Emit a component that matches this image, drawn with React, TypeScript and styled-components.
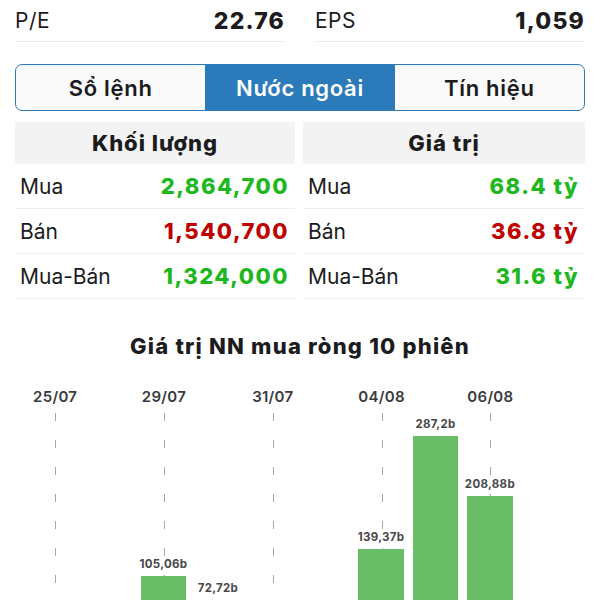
import React from 'react';
import styled, { createGlobalStyle } from 'styled-components';

const GlobalStyle = createGlobalStyle`
	html, body {
		margin: 0;
		padding: 0;
		overflow: hidden;
		background: #ffffff;
		font-family: Inter, 'Noto Sans', sans-serif;
		color: #1c1c1e;
	}
`;

type Row = { label: string; value: string; tone: 'up' | 'down' };

const volumeRows: Row[] = [
	{ label: 'Mua', value: '2,864,700', tone: 'up' },
	{ label: 'Bán', value: '1,540,700', tone: 'down' },
	{ label: 'Mua-Bán', value: '1,324,000', tone: 'up' },
];

const valueRows: Row[] = [
	{ label: 'Mua', value: '68.4 tỷ', tone: 'up' },
	{ label: 'Bán', value: '36.8 tỷ', tone: 'down' },
	{ label: 'Mua-Bán', value: '31.6 tỷ', tone: 'up' },
];

type Session = { date: string; value: number; showDate: boolean };

const sessions: Session[] = [
	{ date: '25/07', value: -40, showDate: true },
	{ date: '28/07', value: -30, showDate: false },
	{ date: '29/07', value: 105.06, showDate: true },
	{ date: '30/07', value: 72.72, showDate: false },
	{ date: '31/07', value: -20, showDate: true },
	{ date: '01/08', value: -15, showDate: false },
	{ date: '04/08', value: 139.37, showDate: true },
	{ date: '05/08', value: 287.2, showDate: false },
	{ date: '06/08', value: 208.88, showDate: true },
	{ date: '07/08', value: -10, showDate: false },
];

const tabs = ['Sổ lệnh', 'Nước ngoài', 'Tín hiệu'];

const PX_PER_B = 0.765;
const ZERO_OFFSET = 251; // px from top of plot to zero line

const fmt = (v: number) => `${String(v).replace('.', ',')}b`;

export default function App() {
	return (
		<Page>
			<GlobalStyle />
			<StatsRow>
				<Stat>
					<StatLabel>P/E</StatLabel>
					<StatValue>22.76</StatValue>
				</Stat>
				<Stat>
					<StatLabel>EPS</StatLabel>
					<StatValue>1,059</StatValue>
				</Stat>
			</StatsRow>

			<Segmented>
				{tabs.map((t, i) => (
					<Tab key={t} $active={i === 1}>
						{t}
					</Tab>
				))}
			</Segmented>

			<Tables>
				<Table>
					<TableHead>Khối lượng</TableHead>
					{volumeRows.map((r) => (
						<TableRow key={r.label}>
							<RowLabel>{r.label}</RowLabel>
							<RowValue $tone={r.tone}>{r.value}</RowValue>
						</TableRow>
					))}
				</Table>
				<Table>
					<TableHead>Giá trị</TableHead>
					{valueRows.map((r) => (
						<TableRow key={r.label}>
							<RowLabel>{r.label}</RowLabel>
							<RowValue $tone={r.tone}>{r.value}</RowValue>
						</TableRow>
					))}
				</Table>
			</Tables>

			<ChartTitle>Giá trị NN mua ròng 10 phiên</ChartTitle>

			<Chart>
				{sessions.map((s) => (
					<Slot key={s.date}>
						<DateLabel>{s.showDate ? s.date : ''}</DateLabel>
						<Plot>
							{s.showDate && <GuideLine />}
							{s.value > 0 && (
								<Bar style={{ top: ZERO_OFFSET - s.value * PX_PER_B, height: s.value * PX_PER_B }}>
									<BarValue>{fmt(s.value)}</BarValue>
								</Bar>
							)}
						</Plot>
					</Slot>
				))}
			</Chart>
		</Page>
	);
}

const Page = styled.div`
	width: 600px;
	padding: 0 15px;
	box-sizing: border-box;
`;

const StatsRow = styled.div`
	display: grid;
	grid-template-columns: 1fr 1fr;
	column-gap: 30px;
`;

const Stat = styled.div`
	display: flex;
	justify-content: space-between;
	align-items: center;
	height: 41px;
	border-bottom: 1px solid #ececec;
`;

const StatLabel = styled.span`
	font-size: 21px;
	font-weight: 400;
	letter-spacing: 0.5px;
	color: #1c1c1e;
`;

const StatValue = styled.span`
	font-size: 23px;
	font-weight: 800;
	letter-spacing: 1.2px;
	color: #1c1c1e;
`;

const Segmented = styled.div`
	display: grid;
	grid-template-columns: repeat(3, 1fr);
	margin-top: 22px;
	height: 47px;
	border: 1.5px solid #2b7bba;
	border-radius: 7px;
	overflow: hidden;
	box-sizing: border-box;
	background: #fafafa;
`;

const Tab = styled.div<{ $active: boolean }>`
	display: flex;
	align-items: center;
	justify-content: center;
	font-size: 22px;
	font-weight: 600;
	letter-spacing: 0.7px;
	color: ${(p) => (p.$active ? '#ffffff' : '#1c1c1e')};
	background: ${(p) => (p.$active ? '#2b7bba' : 'transparent')};
`;

const Tables = styled.div`
	display: grid;
	grid-template-columns: 280px 282px;
	column-gap: 8px;
	margin-top: 11px;
`;

const Table = styled.div`
	display: flex;
	flex-direction: column;
`;

const TableHead = styled.div`
	height: 42px;
	display: flex;
	align-items: center;
	justify-content: center;
	background: #f3f3f3;
	font-size: 22px;
	font-weight: 800;
	letter-spacing: 1px;
	color: #1c1c1e;
`;

const TableRow = styled.div`
	height: 44px;
	display: flex;
	align-items: center;
	justify-content: space-between;
	padding: 0 6px 0 5px;
	border-bottom: 1px solid #eeeeee;
`;

const RowLabel = styled.span`
	font-size: 21px;
	font-weight: 400;
	color: #1c1c1e;
`;

const RowValue = styled.span<{ $tone: 'up' | 'down' }>`
	font-size: 22px;
	font-weight: 800;
	letter-spacing: 1.5px;
	color: ${(p) => (p.$tone === 'up' ? '#1db81d' : '#c00000')};
`;

const ChartTitle = styled.div`
	margin-top: 34px;
	text-align: center;
	font-size: 22px;
	font-weight: 800;
	letter-spacing: 1.2px;
	color: #1c1c1e;
`;

const Chart = styled.div`
	display: grid;
	grid-template-columns: repeat(10, 1fr);
	margin: 28px 13px 0;
`;

const Slot = styled.div`
	display: flex;
	flex-direction: column;
	align-items: center;
`;

const DateLabel = styled.div`
	height: 16px;
	font-size: 15px;
	font-weight: 600;
	letter-spacing: 0.3px;
	color: #3a3a3c;
	white-space: nowrap;
`;

const Plot = styled.div`
	position: relative;
	width: 100%;
	height: 330px;
	margin-top: 2px;
`;

const GuideLine = styled.div`
	position: absolute;
	left: 50%;
	top: 8px;
	bottom: 0;
	width: 1px;
	background: repeating-linear-gradient(to bottom, #a8a8a8 0 8px, transparent 8px 27px);
`;

const Bar = styled.div`
	position: absolute;
	left: 4px;
	right: 5px;
	background: #6abd67;
`;

const BarValue = styled.div`
	position: absolute;
	bottom: 100%;
	left: 50%;
	transform: translateX(-50%);
	margin-bottom: 5px;
	font-size: 11.5px;
	font-weight: 700;
	letter-spacing: 0.3px;
	color: #48484a;
	white-space: nowrap;
`;
